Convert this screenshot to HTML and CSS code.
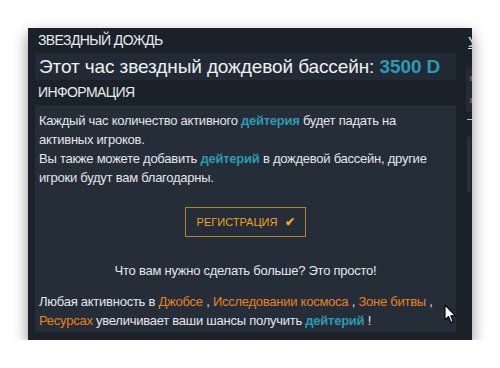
FILE: index.html
```html
<!DOCTYPE html>
<html lang="ru">
<head>
<meta charset="utf-8">
<link rel="stylesheet" href="styles.css">
</head>
<body>
<div class="window">
  <div class="main">
    <div class="title">Звездный дождь</div>
    <div class="pool">Этот час звездный дождевой бассейн: <b class="cyan">3500 D</b></div>
    <div class="title">Информация</div>
    <div class="content">
      <p class="intro">Каждый час количество активного <b class="cyan">дейтерия</b> будет падать на<br>активных игроков.<br>Вы также можете добавить <b class="cyan">дейтерий</b> в дождевой бассейн, другие<br>игроки будут вам благодарны.</p>
      <div class="btn-row"><span class="btn">Регистрация <span class="check">&#10004;</span></span></div>
      <p class="simple">Что вам нужно сделать больше? Это просто!</p>
      <p class="activity">Любая активность в <span class="orange">Джобсе</span> , <span class="orange">Исследовании космоса</span> , <span class="orange">Зоне битвы</span> ,<br><span class="orange">Ресурсах</span> увеличивает ваши шансы получить <b class="cyan">дейтерий</b> !</p>
    </div>
  </div>
  <div class="side">
    <div class="side-title">У</div>
    <div class="side-box"><span class="dot d1"></span><span class="dot d2"></span></div>
    <div class="side-dash"></div>
    <div class="side-strip"></div>
  </div>
  <svg class="cursor" width="13" height="20" viewBox="0 0 13 20"><path d="M1 1 L1 16 L4.5 12.5 L7 18.5 L9.2 17.5 L6.8 11.8 L11.5 11.8 Z" fill="#fff" stroke="#000" stroke-width="1.1" stroke-linejoin="round"/></svg>
</div>
</body>
</html>
```
FILE: styles.css
```css
html, body {
  margin: 0;
  background: #ffffff;
}
body {
  font-family: "Liberation Sans", Arial, sans-serif;
  color: #e4e6e8;
}
.window {
  position: relative;
  margin: 28px 0 0 28px;
  width: 444px;
  height: 312px;
  background: #1b2129;
  box-shadow: 0 6px 14px rgba(0, 0, 0, 0.45);
  display: flex;
  gap: 10px;
  padding-left: 7px;
  box-sizing: border-box;
  overflow: hidden;
}
.main {
  width: 421px;
  flex: none;
  display: flex;
  flex-direction: column;
}
.title {
  height: 25px;
  line-height: 25px;
  font-size: 14px;
  letter-spacing: -0.6px;
  text-transform: uppercase;
  padding-left: 3px;
  color: #e8eaec;
}
.pool {
  height: 27px;
  line-height: 27px;
  background: #222b35;
  font-size: 19px;
  letter-spacing: -0.1px;
  padding-left: 4px;
  color: #eef0f2;
  white-space: nowrap;
}
.cyan {
  color: #2c9bb2;
  font-weight: bold;
}
.orange {
  color: #e8821f;
}
.content {
  background: #242d38;
  height: 227px;
  padding: 6px 4px 0 4px;
  box-sizing: border-box;
  font-size: 13px;
  letter-spacing: -0.25px;
  line-height: 19px;
}
.content p {
  margin: 0;
  white-space: nowrap;
}
.btn-row {
  display: flex;
  justify-content: center;
  margin-top: 20px;
}
.btn {
  display: inline-flex;
  align-items: center;
  gap: 8px;
  height: 30px;
  padding: 0 10px 0 11px;
  box-sizing: border-box;
  border: 1px solid #b08525;
  color: #f0a21e;
  font-size: 11px;
  letter-spacing: 0;
  text-transform: uppercase;
}
.check {
  font-size: 12px;
  font-weight: bold;
  color: #f4a81c;
}
.simple {
  text-align: center;
  margin-top: 24px !important;
}
.activity {
  margin-top: 12px !important;
}
.side {
  width: 40px;
  flex: none;
  display: flex;
  flex-direction: column;
}
.side-title {
  height: 25px;
  line-height: 25px;
  font-size: 14px;
  padding-left: 2px;
  margin-top: 2px;
  text-decoration: underline;
}
.side-box {
  position: relative;
  margin-top: 12px;
  height: 45px;
  background: #232c36;
}
.dot {
  position: absolute;
  left: 4px;
  width: 4px;
  height: 5px;
  background: #7a5a35;
}
.d1 { top: 9px; }
.d2 { top: 31px; }
.side-dash {
  margin: 7px 0 0 1px;
  width: 6px;
  height: 1px;
  background: #b8bcc0;
}
.side-strip {
  margin: 17px 0 0 1px;
  height: 55px;
  width: 4px;
  background: #26303b;
}
.cursor {
  position: absolute;
  left: 416px;
  top: 276px;
}
```
